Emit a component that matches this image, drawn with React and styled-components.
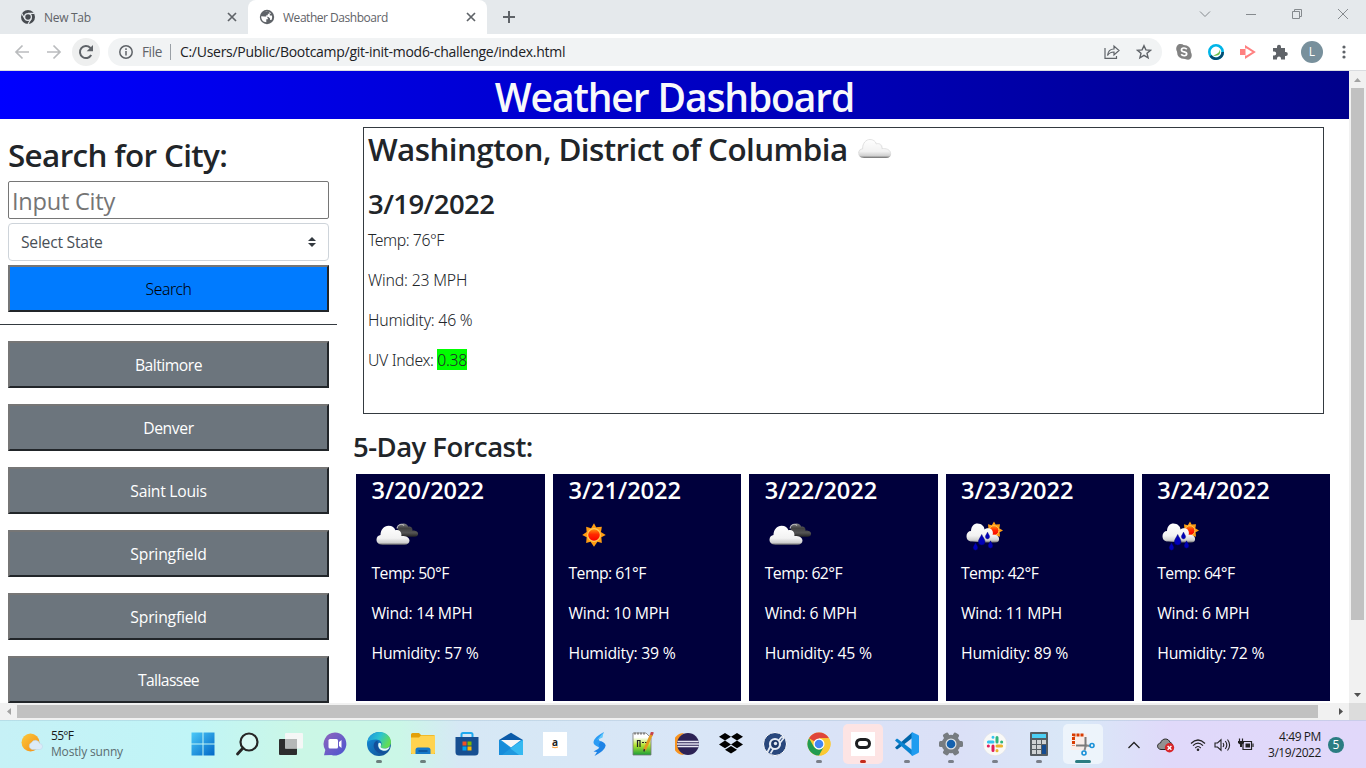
import React from "react";
import styled, { createGlobalStyle } from "styled-components";

const GlobalStyle = createGlobalStyle`
  * { box-sizing: border-box; }
  body { margin: 0; overflow: hidden; background: #fff; font-family: "Open Sans", "Noto Sans", sans-serif; color: #212529; }
  button, input { font-family: inherit; }
  svg { display: block; flex: none; }
`;

const Window = styled.div`
  width: 1366px;
  height: 768px;
  display: flex;
  flex-direction: column;
  overflow: hidden;
`;

/* ---------- Browser chrome ---------- */

const TabStrip = styled.div`
  height: 34px;
  flex: none;
  display: flex;
  background: #e5e9ec;
`;

const Tab = styled.div`
  width: ${(p) => (p.$active ? 239 : 248)}px;
  height: 34px;
  display: flex;
  align-items: center;
  padding: ${(p) => (p.$active ? "0 10px 0 11px" : "0 10px 0 20px")};
  background: ${(p) => (p.$active ? "#fff" : "transparent")};
  border-radius: 8px 8px 0 0;
  font-size: 12px;
  line-height: 15px;
  letter-spacing: ${(p) => (p.$active ? -0.47 : -0.3)}px;
  color: #5f6368;
  white-space: nowrap;
`;

const TabTitle = styled.span`
  flex: 1;
  padding-left: 8px;
`;

const NewTabButton = styled.div`
  width: 44px;
  display: flex;
  align-items: center;
  justify-content: center;
`;

const WindowControls = styled.div`
  margin-left: auto;
  height: 28px;
  display: flex;
  align-items: center;
`;

const WindowButton = styled.div`
  width: 46px;
  display: flex;
  justify-content: center;
`;

const Toolbar = styled.div`
  height: 37px;
  flex: none;
  display: flex;
  align-items: center;
  padding-left: 8px;
  border-bottom: 1px solid #dadce0;
  background: #fff;
`;

const NavButton = styled.div`
  width: 28px;
  height: 28px;
  margin-right: ${(p) => p.$gap}px;
  border-radius: 14px;
  display: flex;
  align-items: center;
  justify-content: center;
  background: ${(p) => (p.$hover ? "#eeefef" : "transparent")};
`;

const Omnibox = styled.div`
  width: 1054px;
  height: 28px;
  border-radius: 14px;
  background: #f1f3f4;
  display: flex;
  align-items: center;
  padding: 0 10px 0 11px;
  font-size: 14px;
  white-space: nowrap;
`;

const Scheme = styled.span`
  margin-left: 9px;
  padding-right: 8px;
  line-height: 16px;
  color: #5f6368;
  font-size: 13.6px;
  letter-spacing: -0.4px;
  border-right: 1px solid #9aa0a6;
`;

const Url = styled.span`
  margin-left: 9px;
  letter-spacing: -0.275px;
  line-height: 18px;
  color: #202124;
  flex: 1;
`;

const OmniIcons = styled.div`
  display: flex;
  gap: 16px;
`;

const Extensions = styled.div`
  display: flex;
  align-items: center;
  padding-left: 14px;
  gap: 16px;
`;

const Avatar = styled.div`
  width: 22px;
  height: 22px;
  margin: 0 -3px;
  border-radius: 50%;
  background: #78909c;
  color: #fff;
  font-size: 12px;
  line-height: 22px;
  text-align: center;
`;

/* ---------- Page viewport ---------- */

const Viewport = styled.div`
  height: 632px;
  flex: none;
  display: flex;
`;

const Page = styled.div`
  width: 1349px;
  height: 632px;
  overflow: hidden;
`;

const Header = styled.h1`
  margin: 0;
  height: 48px;
  line-height: 51px;
  font-size: 39px;
  font-weight: 600;
  letter-spacing: -1.12px;
  color: #f8f9fa;
  text-align: center;
  background: linear-gradient(to right, blue, darkblue);
`;

const Columns = styled.div`
  display: flex;
`;

const Sidebar = styled.aside`
  width: 337px;
  flex: none;
`;

const SearchForm = styled.div`
  padding: 17px 8px 12px;
  border-bottom: 1px solid #343a40;
  display: flex;
  flex-direction: column;
  gap: 4px;
`;

const SearchTitle = styled.h2`
  margin: 0 0 3px;
  height: 38px;
  line-height: 38px;
  font-size: 31.4px;
  font-weight: 600;
  letter-spacing: -0.64px;
`;

const CityInput = styled.input`
  height: 38px;
  width: 321px;
  padding: 3px 3px 1px;
  border: 1px solid #767676;
  border-radius: 2px;
  font-size: 23.6px;
  letter-spacing: -0.25px;
  &::placeholder { color: #757575; opacity: 1; }
`;

const StateSelect = styled.div`
  height: 38px;
  border: 1px solid #ced4da;
  border-radius: 4px;
  padding: 0 12px;
  display: flex;
  align-items: center;
  justify-content: space-between;
  font-size: 15.7px;
  letter-spacing: -0.26px;
  color: #495057;
`;

const BlockButton = styled.button`
  display: block;
  width: 321px;
  height: 47px;
  padding: 0;
  border: 2px solid;
  border-color: #767676 #212529 #212529 #767676;
  background: ${(p) => (p.$primary ? "#007bff" : "#6c757d")};
  color: ${(p) => (p.$primary ? "#000" : "#fff")};
  font-family: ${(p) => (p.$primary ? '"Noto Sans"' : '"Open Sans"')}, sans-serif;
  font-weight: ${(p) => (p.$primary ? 350 : 400)};
  font-size: 15.7px;
  letter-spacing: ${(p) => p.$track}px;
`;

const History = styled.div`
  padding: 16px 8px 0;
  display: flex;
  flex-direction: column;
  gap: 16px;
`;

const Content = styled.main`
  width: 1012px;
  padding: 8px 19px 0 16px;
`;

const Current = styled.section`
  width: 961px;
  height: 287px;
  margin-left: 10px;
  padding: 3px 4px;
  border: 1px solid #343a40;
`;

const CityName = styled.h2`
  margin: 0 0 17px;
  height: 38px;
  line-height: 35px;
  display: flex;
  align-items: flex-start;
  font-size: 31.4px;
  font-weight: 600;
  letter-spacing: -0.58px;
  white-space: nowrap;
  svg { margin: 7px 0 0 9px; }
`;

const CurrentDate = styled.h3`
  margin: 0 0 8px;
  height: 34px;
  line-height: 35px;
  font-size: 27.5px;
  font-weight: 600;
  letter-spacing: -0.57px;
`;

const Reading = styled.p`
  margin: 0 0 16px;
  height: 24px;
  line-height: ${(p) => (p.$light ? 25 : 23)}px;
  font-size: 15.8px;
  white-space: nowrap;
  font-family: ${(p) => (p.$light ? '"Noto Sans"' : '"Open Sans"')}, sans-serif;
  font-weight: ${(p) => (p.$light ? 350 : 400)};
  letter-spacing: ${(p) => p.$track ?? 0}px;
`;

const UvBadge = styled.span`
  display: inline-block;
  height: 21px;
  line-height: 22px;
  background: #0f0;
`;

const ForecastTitle = styled.h3`
  margin: 16px 0 10px;
  height: 34px;
  line-height: 34px;
  font-size: 27.5px;
  font-weight: 600;
  letter-spacing: -0.53px;
`;

const ForecastRow = styled.div`
  margin-left: 3px;
  width: 974px;
  display: grid;
  grid-template-columns: 189px repeat(4, 1fr);
  gap: 8px;
`;

const DayCard = styled.article`
  height: 227px;
  padding: 0 15.500px;
  background: #00003c;
  color: #fff;
`;

const DayDate = styled.h4`
  margin: 0;
  height: 35px;
  line-height: 32px;
  font-size: 23.6px;
  font-weight: 600;
  letter-spacing: -0.05px;
`;

const DayIcon = styled.div`
  height: 50px;
  margin-bottom: 3px;
`;

/* ---------- Scroll bars ---------- */

const VScroll = styled.div`
  width: 17px;
  height: 632px;
  background: #f1f1f1;
  display: flex;
  flex-direction: column;
  align-items: center;
  justify-content: space-between;
`;

const HScroll = styled.div`
  height: 17px;
  flex: none;
  background: #f1f1f1;
  display: flex;
  align-items: center;
`;

const ScrollArrow = styled.div`
  width: 17px;
  height: 17px;
  margin-left: ${(p) => (p.$end ? "auto" : 0)};
  display: flex;
  align-items: center;
  justify-content: center;
`;

const ScrollThumb = styled.div`
  width: ${(p) => p.$w}px;
  height: ${(p) => p.$h}px;
  background: #c1c1c1;
  margin-bottom: ${(p) => p.$after ?? 0}px;
`;

const ScrollCorner = styled.div`
  width: 17px;
  height: 17px;
  background: #dcdcdc;
`;

/* ---------- Taskbar ---------- */

const Taskbar = styled.div`
  height: 48px;
  flex: none;
  display: flex;
  border-top: 1px solid rgba(150, 180, 200, 0.3);
  background: linear-gradient(to right, #c6f1f6 0, #c0f5f7 190px, #cbf7e6 300px, #cbf7e7 400px, #d6e8f5 460px, #d9e6f7 700px, #dbe0f7 960px, #d9e8f7 1080px, #e0d9fa 1170px, #e1d8fa 100%);
`;

const Widget = styled.div`
  width: 181px;
  padding: 7px 0 0 20px;
  display: flex;
  gap: 7px;
  font-size: 12px;
  line-height: 16px;
  svg { margin-top: 5px; }
`;

const Temperature = styled.div`
  letter-spacing: -0.7px;
  color: #1a1a1a;
`;

const Condition = styled.div`
  letter-spacing: -0.17px;
  color: #5a6c70;
`;

const AppSlot = styled.div`
  width: 44px;
  height: 47px;
  display: flex;
  flex-direction: column;
  align-items: center;
`;

const AppTile = styled.div`
  width: 40px;
  height: 40px;
  margin-top: 3px;
  flex: none;
  display: flex;
  align-items: center;
  justify-content: center;
  border-radius: 5px;
  background: ${(p) => p.$bg ?? "transparent"};
`;

const Indicator = styled.div`
  width: ${(p) => (p.$wide ? 16 : 6)}px;
  height: 3px;
  margin-top: -4px;
  border-radius: 2px;
  background: ${(p) => p.$color};
`;

const Tray = styled.div`
  margin-left: auto;
  width: 239px;
  display: flex;
  align-items: center;
`;

const TrayIcon = styled.div`
  width: ${(p) => p.$w}px;
  display: flex;
  justify-content: center;
`;

const Clock = styled.div`
  width: 68px;
  text-align: right;
  font-size: 12px;
  line-height: 16px;
  letter-spacing: -0.42px;
  color: #1b1b1b;
`;

const Badge = styled.div`
  width: 16px;
  height: 16px;
  margin-left: 7px;
  border-radius: 50%;
  background: #2b7d82;
  color: #fff;
  font-size: 12px;
  line-height: 16px;
  text-align: center;
`;

/* ---------- Drawings ---------- */

const Close = () => (
  <svg width="12" height="12" viewBox="0 0 12 12" stroke="#5f6368" strokeWidth="1.7"><path d="M2 2l8 8M10 2l-8 8" /></svg>
);

const ChromeMono = () => (
  <svg width="16" height="16" viewBox="0 0 16 16">
    <circle cx="8" cy="8" r="7" fill="#474b50" />
    <circle cx="8" cy="8" r="3.4" fill="none" stroke="#e5e9ec" strokeWidth="1.3" />
    <path d="M8 4.4h6.2M4.8 9.8L1.8 4.6M11.2 9.6L8 15" stroke="#e5e9ec" strokeWidth="1.1" />
  </svg>
);

const Globe = () => (
  <svg width="16" height="16" viewBox="0 0 16 16">
    <circle cx="8" cy="8" r="7.2" fill="#5f6368" />
    <path d="M2.200 7.200l3.200.3h2.100l1.300 1.500v1.300H7.300v2.900C4 13 2 10.500 2.200 7.200zM6.300 2.400h3l1.200 1.200v1.100H8.800v1.500H7.300v1.300l2.200.6 1.600 1.500v1.500h1.300c.8-1.600 1-3.300.4-4.700h-2V4.800h1.300C11.200 3 9 1.900 6.300 2.400z" fill="#fff" />
  </svg>
);

const Cloud = ({ x = 0, y = 0, s = 1, fill }) => (
  <path transform={`translate(${x} ${y}) scale(${s})`} fill={fill} d="M6 19C1.500 19 0 16.500 0 13.800 0 11.200 2 9.500 4 9.300 4 4 7.500 0 12 0c3.800 0 6 2 7 4.500 2.500-1 5.500.7 5.800 3.500.2.800.2 1.600 0 2.200 3-.5 8.200.8 8.200 4.600 0 2.500-2 4.200-5 4.200z" />
);

const CloudDefs = ({ id }) => (
  <defs>
    <linearGradient id={`${id}w`} x1="0" y1="0" x2="0" y2="1">
      <stop offset="0" stopColor="#fff" /><stop offset=".65" stopColor="#f2f2f2" /><stop offset=".88" stopColor="#d0d0d0" /><stop offset="1" stopColor="#6b6b6b" />
    </linearGradient>
    <linearGradient id={`${id}d`} x1="0" y1="0" x2="0" y2="1">
      <stop offset="0" stopColor="#858585" /><stop offset=".35" stopColor="#404040" /><stop offset=".7" stopColor="#555" /><stop offset="1" stopColor="#222" />
    </linearGradient>
    <linearGradient id={`${id}s`} x1="0" y1="0" x2="0" y2="1">
      <stop offset="0" stopColor="#ff9a10" /><stop offset=".45" stopColor="#ff2a00" /><stop offset="1" stopColor="#f80000" />
    </linearGradient>
  </defs>
);

const Rays = ({ x, y, s = 1, id }) => (
  <g transform={`translate(${x} ${y}) scale(${s})`}>
    <path fill="#ff9d12" d="M0-12L2.200-8 8-8.500 7.500-5 7-3 12 0 7.500 2.300 8 8.200 3.500 7 0 12-3.500 7-8 8.200-7.500 2.300-12 0-7.500-3-8-8.500-3-7z" />
    <circle r="6.500" fill={`url(#${id}s)`} stroke="#ffcc58" strokeWidth="1.200" />
  </g>
);

const CurrentCloud = () => (
  <svg width="35" height="22" viewBox="0 0 35 22">
    <CloudDefs id="cc" />
    <Cloud x={1.200} y={1} fill="url(#ccw)" />
    <path d="M1.600 15c.5-3 2-4 4-4C5.500 5 9 1.500 13 1.500c3 0 5.500 1.500 6.300 4.500 3-1.300 5.600.8 5.600 4.600 4-.5 8 1 8.500 4" fill="none" stroke="#dcdcdc" strokeWidth=".8" />
  </svg>
);

const BrokenClouds = () => (
  <svg width="50" height="50" viewBox="0 0 50 50">
    <CloudDefs id="bc" />
    <Cloud x={23} y={14.500} s={0.7} fill="url(#bcd)" />
    <path d="M25 19.500c1-4 4.500-5.500 7-3" stroke="#b8b8b8" fill="none" strokeWidth="1.200" />
    <Cloud x={4.500} y={16.800} fill="url(#bcw)" />
  </svg>
);

const Sun = () => (
  <svg width="50" height="50" viewBox="0 0 50 50"><CloudDefs id="su" /><Rays x={25} y={26} s={0.98} id="su" /></svg>
);

const Drop = ({ x, y, s = 1 }) => (
  <path transform={`translate(${x} ${y}) scale(${s})`} fill="#0000b8" stroke="#000070" strokeWidth=".5" d="M0-6C1.500-2.500 3.300-1 3.300 1.200A3.300 3.300 0 0 1-3.300 1.200C-3.300-1-1.500-2.500 0-6z" />
);

const ShowerRain = () => (
  <svg width="50" height="50" viewBox="0 0 50 50">
    <CloudDefs id="sr" />
    <Rays x={33} y={21.500} s={0.75} id="sr" />
    <path d="M11 32.500C7 32.500 5.500 30 5.500 27c0-3 2-5 4.500-5 .2-5 3-7.500 6.500-7.500 4 0 7 3 7 6 1.500-1.500 7-2 8 1.500.5 1.500.5 3 0 4 3-1 6 .5 6.500 3 .5 3-1 4.500-4 4.500H23z" fill="url(#srw)" />
    <Drop x={20.700} y={31.500} /><Drop x={26.500} y={27} s={0.65} /><Drop x={14.500} y={38} s={0.7} /><Drop x={29.500} y={36} s={0.7} />
  </svg>
);

const ICONS = { clouds: BrokenClouds, sun: Sun, rain: ShowerRain };

const Icon24 = ({ children, ...rest }) => <svg width="24" height="24" viewBox="0 0 24 24" {...rest}>{children}</svg>;

const Windows = () => (
  <Icon24>
    <defs><linearGradient id="win" x1="0" y1="0" x2="1" y2="1"><stop offset="0" stopColor="#4cc9f8" /><stop offset="1" stopColor="#0067c7" /></linearGradient></defs>
    <path fill="url(#win)" d="M.5.5H11.500V11.500H.5zM12.500.5H23.500V11.500H12.500zM.5 12.500H11.500V23.500H.5zM12.500 12.500H23.500V23.500H12.500z" />
  </Icon24>
);
const Search = () => <Icon24 fill="none" stroke="#262626"><circle cx="14" cy="10" r="8.500" fill="#ffffff55" strokeWidth="2.200" /><path d="M8 16l-5.500 6" strokeWidth="2.800" strokeLinecap="round" /></Icon24>;
const TaskView = () => (
  <Icon24>
    <rect x="0" y="7" width="18" height="16" rx="1" fill="#2d2d2d" />
    <rect x="6" y="1" width="18" height="15.500" rx="1" fill="#f5f7f6" />
    <rect x="6" y="7" width="12" height="9.500" fill="#b5b8b7" />
  </Icon24>
);
const Chat = () => (
  <Icon24>
    <defs><linearGradient id="cht" x1="0" y1="0" x2="1" y2="1"><stop offset="0" stopColor="#9065bd" /><stop offset="1" stopColor="#4a55d0" /></linearGradient></defs>
    <path fill="url(#cht)" d="M12 .5A11.500 11.500 0 1 1 8.500 23L1 23.200 2.300 18A11.500 11.500 0 0 1 12 .5z" />
    <rect x="5.500" y="7" width="9.500" height="9.500" rx="1.500" fill="#fff" /><path d="M16 10L18.500 8v8L16 14z" fill="#fff" />
  </Icon24>
);
const Edge = () => (
  <Icon24>
    <defs>
      <linearGradient id="eg" x1="0" y1="0" x2="1" y2=".4"><stop offset="0" stopColor="#1a8fdc" /><stop offset=".55" stopColor="#2cc3d0" /><stop offset="1" stopColor="#62dc55" /></linearGradient>
      <linearGradient id="eb" x1="0" y1="0" x2="1" y2="1"><stop offset="0" stopColor="#1490df" /><stop offset="1" stopColor="#114a8b" /></linearGradient>
    </defs>
    <circle cx="12" cy="12" r="12" fill="url(#eb)" />
    <path d="M.2 10.500C1.500 3.500 7 0 12.500 0 19 0 24 4.800 24 10c0 4-3 6.500-6.500 6.500-3 0-4.500-1.200-3.700-2.400C16 11 13.500 7.500 9 7.500c-4 0-7.500 1-8.800 3z" fill="url(#eg)" />
    <path d="M10.500 8.500c-3 1-4.500 4-3.500 7 1.200 4.500 6.500 7.500 12 5C14 20.500 9.500 16 11 11.500z" fill="#134f9a" />
    <path d="M13.800 14.100c-.8 1.200.7 2.400 3.700 2.400 2 0 4-.8 5.200-2.300-.3 3.500-4 5.300-7.200 4.300-3.200-1-5-4-4-7.300.8-1.200 3.500-.5 2.300 2.900z" fill="#e5fbf5" />
  </Icon24>
);
const Folder = () => (
  <Icon24>
    <path d="M0 2.500Q0 1 1.500 1H8l2 2H22.500Q24 3 24 4.500V22H0z" fill="#e3a008" />
    <path d="M0 5.500H8L10 3.500H24V20.500Q24 22 22.500 22H1.500Q0 22 0 20.500z" fill="#ffd34f" />
    <path d="M4.500 18Q4.500 15.500 7 15.500H17Q19.500 15.500 19.500 18V22H4.500z" fill="#1478c8" /><path d="M7.500 19H16.500" stroke="#0a4f96" strokeWidth="1.500" />
  </Icon24>
);
const Store = () => (
  <Icon24>
    <path d="M6.500 6V2.500Q6.500 1 8 1H16Q17.500 1 17.500 2.500V6" fill="none" stroke="#1fa9ef" strokeWidth="2" />
    <path d="M.5 5H23.500V20Q23.500 23.500 20 23.500H4Q.5 23.500 .5 20z" fill="#174f91" />
    <path d="M7.500 9.500h4v4h-4z" fill="#f25022" /><path d="M12.500 9.500h4v4h-4z" fill="#7fba00" /><path d="M7.500 14.500h4v4h-4z" fill="#00a4ef" /><path d="M12.500 14.500h4v4h-4z" fill="#ffb900" />
  </Icon24>
);
const Mail = () => <Icon24><path d="M0 8L12 .7 24 8z" fill="#0b5ba9" /><path d="M0 8H24V23H0z" fill="#1894df" /><path d="M2 8H22L12 15.500z" fill="#f6f7f8" /><path d="M24 8V23H3L16 13z" fill="#35b9f1" /><path d="M0 8l20 15H0z" fill="#1687d5" opacity=".65" /></Icon24>;
const Amazon = () => <Icon24><rect width="24" height="24" fill="#fff" /><text x="9" y="14" fontSize="10" fontWeight="700" fontFamily="Open Sans" fill="#222">a</text><path d="M9 15q3 1.500 6 0" stroke="#f79b34" fill="none" /></Icon24>;
const Swift = () => <Icon24><path d="M17 0C11 3 6.500 7 6.500 10.500c0 3 5.500 4 6.500 6l5.500-3C18 10.500 13 10.500 12 8c0-2 3-4 5-8z" fill="#2c9cf4" /><path d="M7.500 24c6-3 11-7 11-10.500 0-2-3-4-5-4.500L11.500 13c2 1.500 1 2.500-.5 4l-4.500 2.500 3.500.5z" fill="#1d83e6" /><path d="M16.500.5L15.500 5.500 10 8z" fill="#60c8fb" /></Icon24>;
const Notepad = () => (
  <Icon24>
    <defs><linearGradient id="npp" x1="0" y1="0" x2="0" y2="1"><stop offset=".2" stopColor="#fff" /><stop offset=".55" stopColor="#b5e52e" /><stop offset="1" stopColor="#1a9e39" /></linearGradient></defs>
    <path d="M2 1H15L20 6V23H2z" fill="url(#npp)" stroke="#777" strokeWidth=".8" /><path d="M3 1.500H15" stroke="#888" strokeWidth="2" strokeDasharray="2 1" />
    <path d="M6.500 15V8.500H9V15M11 10.500h2M14 10.500h2" stroke="#222" strokeWidth="1.200" fill="none" /><path d="M20.500 2.500L13.500 18" stroke="#e39b22" strokeWidth="3" /><path d="M21.500 0l-1.200 3" stroke="#c6454d" strokeWidth="3" /><path d="M13.500 17l-.6 2.500" stroke="#333" strokeWidth="1.500" />
  </Icon24>
);
const Eclipse = () => <Icon24><path d="M9 1A11 11 0 0 0 9 23Q3 18 3 12T9 1z" fill="#f79421" /><circle cx="13" cy="12" r="11" fill="#2c2255" /><path d="M2.500 9.500H23.700M2 12H24M2.500 14.500H23.700" stroke="#e8e6f3" strokeWidth="1.400" /></Icon24>;
const Dropbox = () => <Icon24 fill="#000"><path d="M6 1l6 3.800-6 3.800L0 4.800zM18 1l6 3.800-6 3.800-6-3.800zM6 8.600l6 3.800-6 3.800-6-3.800zM18 8.600l6 3.800-6 3.800-6-3.800zM12 14l6 3.800-6 3.800-6-3.800z" /></Icon24>;
const Satellite = () => <Icon24><circle cx="12" cy="12" r="11.500" fill="#29477c" stroke="#fff" strokeWidth="1" /><circle cx="12" cy="12" r="5" fill="#1d3767" stroke="#e4eaf3" strokeWidth="2.200" /><circle cx="12.500" cy="11.500" r="1.700" fill="#e4eaf3" /><path d="M16 8l2.500-3q2-.5 2 1.500L17 11M7.500 14L4.500 20M10.500 16.500L7.500 21.500" stroke="#e4eaf3" strokeWidth="1.700" fill="none" /></Icon24>;
const Chrome = () => (
  <Icon24>
    <circle cx="12" cy="12" r="11.500" fill="#fbc934" />
    <path d="M12 12L2.040 6.250A11.500 11.500 0 0 1 21.960 6.250H12z" fill="#df453a" />
    <path d="M12 12V6.250H21.960A11.500 11.500 0 0 1 12 23.500L17 15z" fill="#fbc934" />
    <path d="M2.040 6.250L7 14.900 12 17.700 16.500 15.300 12 23.500A11.500 11.500 0 0 1 2.040 6.250z" fill="#229c52" />
    <circle cx="12" cy="12" r="5.500" fill="#fff" /><circle cx="12" cy="12" r="4.300" fill="#4386f5" />
  </Icon24>
);
const Oculus = () => <Icon24><rect width="24" height="24" fill="#fff" /><rect x="5.500" y="7.500" width="13" height="8" rx="4" fill="none" stroke="#1c1e20" strokeWidth="3" /></Icon24>;
const VsCode = () => (
  <Icon24>
    <path d="M17.300.2L.3 15.200Q0 15.700.4 16.100L1.600 17.200Q2 17.500 2.500 17.200L18 5.500z" fill="#0065a9" />
    <path d="M17.300 23.800L.3 8.800Q0 8.300.4 7.900L1.600 6.800Q2 6.500 2.500 6.800L18 18.500z" fill="#0a83d0" />
    <path d="M17.300.2L23.200 3Q24 3.400 24 4.300V19.700Q24 20.600 23.200 21L17.300 24Q16.500 23.500 16.500 22.500V1.600Q16.500.6 17.300.2z" fill="#1f9cf0" />
  </Icon24>
);
const Gear = () => (
  <Icon24>
    <g fill="#777c81">{[0, 60, 120].map((a) => <rect key={a} x="9" y="0" width="6" height="24" rx="1.500" transform={`rotate(${a + 30} 12 12)`} />)}<circle cx="12" cy="12" r="9.300" /></g>
    <circle cx="12" cy="12" r="5.500" fill="#dfe3e6" /><circle cx="12" cy="12" r="4.300" fill="#1461ae" />
  </Icon24>
);
const Slack = () => (
  <Icon24>
    <circle cx="12" cy="12" r="11.800" fill="#f9f9f7" stroke="#d9dbe0" strokeWidth=".5" />
    <g strokeWidth="3" strokeLinecap="round"><path d="M10 5.200V5.300M5.400 10H10" stroke="#36c5f0" /><path d="M14 5.400V10M18.600 10H18.700" stroke="#2eb67d" /><path d="M14 14H18.600M14 18.600V18.700" stroke="#ecb22e" /><path d="M5.300 14H5.400M10 14V18.600" stroke="#e01e5a" /></g>
  </Icon24>
);
const Calculator = () => <Icon24><rect x="3" y="0" width="18" height="24" rx="1" fill="#555d62" /><rect x="5" y="2" width="14" height="4" fill="#4cd0f5" /><path d="M5 8h4v4H5zM10 8h4v4h-4zM15 8h4v4h-4zM5 13h4v4H5zM10 13h4v4h-4zM5 18h4v4H5zM10 18h4v4h-4z" fill="#cdd1d3" /><path d="M15 13h4v9h-4z" fill="#124b91" /></Icon24>;
const Snip = () => (
  <Icon24>
    <rect x="0" y="2" width="16" height="16" fill="#f8eeea" /><path d="M12.500 3H2.500V13.500" fill="none" stroke="#d83b01" strokeWidth="3" strokeDasharray="3 1" />
    <path d="M5 13.500H16M14.500 5V15" stroke="#7a7a7a" strokeWidth="2" /><path d="M15.500 13.500l4 .5M14.500 14.500l-1 4" stroke="#888" strokeWidth="2" />
    <circle cx="21" cy="13.500" r="2" fill="none" stroke="#1a91d8" strokeWidth="1.600" /><circle cx="13" cy="21" r="2" fill="none" stroke="#1a91d8" strokeWidth="1.600" />
  </Icon24>
);

const APPS = [
  { icon: Windows }, { icon: Search }, { icon: TaskView }, { icon: Chat },
  { icon: Edge, dot: "#6b7f7d" }, { icon: Folder, dot: "#6b7f7d" }, { icon: Store }, { icon: Mail },
  { icon: Amazon }, { icon: Swift }, { icon: Notepad }, { icon: Eclipse }, { icon: Dropbox }, { icon: Satellite },
  { icon: Chrome, dot: "#7a7f89" }, { icon: Oculus, dot: "#c42b1c", bg: "#fde4e4" }, { icon: VsCode, dot: "#7a7f89" },
  { icon: Gear, dot: "#7a7f89" }, { icon: Slack, dot: "#7a7f89" }, { icon: Calculator, dot: "#7a7f89" },
  { icon: Snip, dot: "#2b7d82", bg: "#edf4fb", wide: true },
];

const CITIES = [["Baltimore", -0.5], ["Denver", -0.36], ["Saint Louis", -0.27], ["Springfield", -0.17], ["Springfield", -0.17], ["Tallassee", -0.6]];

const DAYS = [
  ["3/20/2022", "clouds", 50, 14, 57],
  ["3/21/2022", "sun", 61, 10, 39],
  ["3/22/2022", "clouds", 62, 6, 45],
  ["3/23/2022", "rain", 42, 11, 89],
  ["3/24/2022", "rain", 64, 6, 72],
];

function BrowserChrome() {
  return (
    <>
      <TabStrip>
        <Tab><ChromeMono /><TabTitle>New Tab</TabTitle><Close /></Tab>
        <Tab $active><Globe /><TabTitle>Weather Dashboard</TabTitle><Close /></Tab>
        <NewTabButton><svg width="12" height="12" stroke="#5f6368" strokeWidth="2"><path d="M6 0v12M0 6h12" /></svg></NewTabButton>
        <WindowControls>
          <WindowButton><svg width="12" height="12" fill="none" stroke="#858a8e"><path d="M1 3.500l5 5 5-5" /></svg></WindowButton>
          <WindowButton><svg width="12" height="12" fill="none" stroke="#858a8e"><path d="M1 6.500h10" /></svg></WindowButton>
          <WindowButton><svg width="12" height="12" fill="none" stroke="#858a8e"><path d="M1.500 3.500h7v7h-7zM3.500 3V1.500h7v7H9" /></svg></WindowButton>
          <WindowButton><svg width="12" height="12" fill="none" stroke="#858a8e"><path d="M1 1l10 10M11 1L1 11" /></svg></WindowButton>
        </WindowControls>
      </TabStrip>
      <Toolbar>
        <NavButton $gap={4}><svg width="16" height="16" fill="none" stroke="#babcbe" strokeWidth="1.700"><path d="M15 8H2M8.500 1.500L2 8l6.500 6.500" /></svg></NavButton>
        <NavButton $gap={4}><svg width="16" height="16" fill="none" stroke="#babcbe" strokeWidth="1.700"><path d="M1 8H14M7.500 1.500L14 8l-6.500 6.500" /></svg></NavButton>
        <NavButton $gap={8} $hover><svg width="16" height="16" fill="none" stroke="#5f6368" strokeWidth="2"><path d="M13.200 11A6 6 0 1 1 12.200 3.800L13.500 5" /><path d="M15 1v6.300H8.700z" fill="#5f6368" stroke="none" /></svg></NavButton>
        <Omnibox>
          <svg width="14" height="14" fill="none" stroke="#5f6368" strokeWidth="1.500"><circle cx="7" cy="7" r="6.200" /><path d="M7 6v4.500M7 3.300v1.600" /></svg>
          <Scheme>File</Scheme>
          <Url>C:/Users/Public/Bootcamp/git-init-mod6-challenge/index.html</Url>
          <OmniIcons>
            <svg width="16" height="16" fill="none" stroke="#5f6368" strokeWidth="1.200"><path d="M1 4v10.300H12.500V12M3.500 11.500C4 7 7 5 10 5V2l5 4.500L10 11V8C7 8 5 9 3.500 11.500z" /></svg>
            <svg width="16" height="16" fill="none" stroke="#5f6368" strokeWidth="1.400"><path d="M8 1.700l1.900 4.200 4.600.4-3.500 3 1.100 4.500L8 11.400l-4.100 2.400L5 9.300l-3.500-3 4.600-.4z" /></svg>
          </OmniIcons>
        </Omnibox>
        <Extensions>
          <svg width="16" height="16"><path d="M4.500 0Q7 0 7.500 1 15 1 15 8.500 16.500 11 15 14t-6 1Q1 15 1 7.500-.5 5 .8 2.300T4.500 0z" fill="#828282" /><path d="M10.800 5.200C9.500 3.500 5.500 3.500 5.500 5.900c0 2.700 5.200 1.300 5.200 3.900 0 2.500-4.200 2.500-5.500.5" fill="none" stroke="#fff" strokeWidth="1.700" /></svg>
          <svg width="16" height="16"><circle cx="8" cy="8" r="6.700" fill="#fff" stroke="#00b5e8" strokeWidth="2.600" /><path d="M14.700 8A6.700 6.700 0 0 1 2.500 11.800" fill="none" stroke="#064c70" strokeWidth="2.600" /><path d="M5 11.500Q11 10 12 5.500 13.500 13 5 11.500z" fill="#69be45" /></svg>
          <svg width="16" height="16" fill="none" stroke="#ff8080" strokeWidth="2"><path d="M1 6h3.500v4H1z" fill="#ff8080" /><path d="M6 4.500V2.800L14 8 6 13.200V11.500" /></svg>
          <svg width="16" height="16" fill="#5f6368"><path d="M1 4h4V2.800a2 2 0 0 1 4 0V4h4v4h.8a2 2 0 0 1 0 4H13v3.500H9v-1a2 2 0 0 0-4 0v1H1v-4h1.200a2 2 0 0 0 0-4H1z" /></svg>
          <Avatar>L</Avatar>
          <svg width="16" height="16" fill="#5f6368"><circle cx="8" cy="3" r="1.600" /><circle cx="8" cy="8" r="1.600" /><circle cx="8" cy="13" r="1.600" /></svg>
        </Extensions>
      </Toolbar>
    </>
  );
}

function WeatherPage() {
  return (
    <Page>
      <Header>Weather Dashboard</Header>
      <Columns>
        <Sidebar>
          <SearchForm>
            <SearchTitle>Search for City:</SearchTitle>
            <CityInput placeholder="Input City" />
            <StateSelect>Select State<svg width="8" height="10" fill="#343a40"><path d="M4 0l4 4H0zM4 10L0 6h8z" /></svg></StateSelect>
            <BlockButton $primary $track={-0.4}>Search</BlockButton>
          </SearchForm>
          <History>
            {CITIES.map(([name, track], i) => <BlockButton key={i} $track={track}>{name}</BlockButton>)}
          </History>
        </Sidebar>
        <Content>
          <Current>
            <CityName>Washington, District of Columbia<CurrentCloud /></CityName>
            <CurrentDate>3/19/2022</CurrentDate>
            <Reading $light $track={-0.45}>Temp: 76°F</Reading>
            <Reading $light $track={-0.18}>Wind: 23 MPH</Reading>
            <Reading $light $track={-0.22}>Humidity: 46 %</Reading>
            <Reading $light $track={-0.35}>UV Index: <UvBadge>0.38</UvBadge></Reading>
          </Current>
          <ForecastTitle>5-Day Forcast:</ForecastTitle>
          <ForecastRow>
            {DAYS.map(([date, kind, temp, wind, humidity]) => {
              const Drawing = ICONS[kind];
              return (
                <DayCard key={date}>
                  <DayDate>{date}</DayDate>
                  <DayIcon><Drawing /></DayIcon>
                  <Reading $track={-0.58}>Temp: {temp}°F</Reading>
                  <Reading $track={-0.24}>Wind: {wind} MPH</Reading>
                  <Reading $track={-0.26}>Humidity: {humidity} %</Reading>
                </DayCard>
              );
            })}
          </ForecastRow>
        </Content>
      </Columns>
    </Page>
  );
}

function SystemTaskbar() {
  return (
    <Taskbar>
      <Widget>
        <svg width="24" height="22" viewBox="0 0 24 22">
          <defs><linearGradient id="wsun" x1="0" y1="0" x2="1" y2="1"><stop offset="0" stopColor="#fcca3c" /><stop offset="1" stopColor="#f38b15" /></linearGradient></defs>
          <circle cx="10.500" cy="9.500" r="9" fill="url(#wsun)" /><path d="M12 16.500a3.700 3.700 0 0 1-.5-7 4.500 4.500 0 0 1 8.200 1 3 3 0 0 1-.3 6z" fill="#dcebf8" stroke="#b9d3e6" strokeWidth=".5" />
        </svg>
        <div><Temperature>55°F</Temperature><Condition>Mostly sunny</Condition></div>
      </Widget>
      {APPS.map(({ icon: AppIcon, dot, bg, wide }, i) => (
        <AppSlot key={i}>
          <AppTile $bg={bg}><AppIcon /></AppTile>
          {dot && <Indicator $color={dot} $wide={wide} />}
        </AppSlot>
      ))}
      <Tray>
        <TrayIcon $w={14}><svg width="14" height="14" fill="none" stroke="#222" strokeWidth="1.300"><path d="M1.500 10L7 4.500 12.500 10" /></svg></TrayIcon>
        <TrayIcon $w={50}><svg width="18" height="16"><path d="M4 12.500C-.5 12-.5 6.500 3.500 6 5 .5 12 1 13 5.500c3.500.5 3.500 6 0 7z" fill="#929292" stroke="#292929" /><circle cx="12.500" cy="10.800" r="4.700" fill="#d9252a" /><path d="M10.600 8.900l3.800 3.800M14.400 8.900l-3.800 3.800" stroke="#fff" strokeWidth="1.400" /></svg></TrayIcon>
        <TrayIcon $w={14}><svg width="16" height="14" fill="none" stroke="#222" strokeWidth="1.200"><path d="M1 5.500Q8-1.500 15 5.500M3 7.700Q8 2.500 13 7.700M5.300 10Q8 7 10.700 10" /><circle cx="8" cy="11.800" r="1.300" fill="#222" stroke="none" /></svg></TrayIcon>
        <TrayIcon $w={34}><svg width="17" height="14" fill="none" stroke="#222" strokeWidth="1.100"><path d="M1 5H3.500L7 1.800v10.400L3.500 9H1zM9 5q1.500 2 0 4M11.300 3q3 4 0 8M13.500 1.500q4.200 5.500 0 11" /></svg></TrayIcon>
        <TrayIcon $w={14}><svg width="16" height="14"><path d="M5 3.500H13.500v8H5z" fill="none" stroke="#222" strokeWidth="1.200" /><path d="M7.500 5.500H12v4H7.500z" fill="#222" /><path d="M15 5.500v3.500M1.500.5v3M4.500.5v3" stroke="#222" strokeWidth="1.200" /><path d="M0 3h6v2L4 6.500V9H2V6.500L0 5z" fill="#222" /></svg></TrayIcon>
        <Clock>4:49 PM<br />3/19/2022</Clock>
        <Badge>5</Badge>
      </Tray>
    </Taskbar>
  );
}

export default function App() {
  return (
    <Window>
      <GlobalStyle />
      <BrowserChrome />
      <Viewport>
        <WeatherPage />
        <VScroll>
          <ScrollArrow><svg width="7" height="4" fill="#a3a3a3"><path d="M3.500 0L7 4H0z" /></svg></ScrollArrow>
          <ScrollThumb $w={13} $h={532} $after={66} />
          <ScrollArrow><svg width="7" height="4" fill="#505050"><path d="M0 0H7L3.500 4z" /></svg></ScrollArrow>
        </VScroll>
      </Viewport>
      <HScroll>
        <ScrollArrow><svg width="4" height="7" fill="#a3a3a3"><path d="M4 0V7L0 3.500z" /></svg></ScrollArrow>
        <ScrollThumb $w={1301} $h={13} />
        <ScrollArrow $end><svg width="4" height="7" fill="#505050"><path d="M0 0V7L4 3.500z" /></svg></ScrollArrow>
        <ScrollCorner />
      </HScroll>
      <SystemTaskbar />
    </Window>
  );
}
